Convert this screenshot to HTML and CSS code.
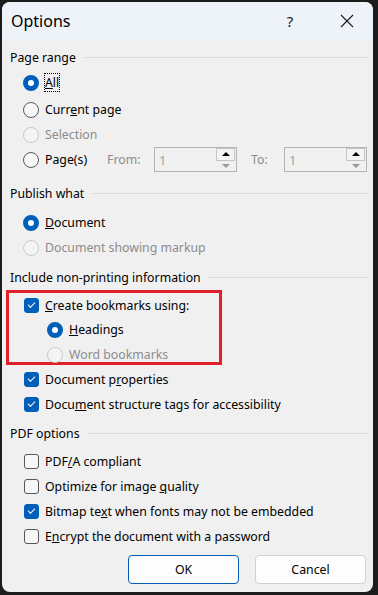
FILE: index.html
```html
<!DOCTYPE html>
<html lang="en">
<head>
    <meta charset="UTF-8">
    <title>Options</title>
    <link rel="stylesheet" href="styles.css">
</head>
<body>
    <div class="window">
        <div class="titlebar">
            <span class="title">Options</span>
            <span class="help">?</span>
            <span class="close">
                <svg width="14" height="14" viewBox="0 0 14 14"><path d="M1 1L13 13M13 1L1 13" stroke="#1a1a1a" stroke-width="1.1" fill="none"/></svg>
            </span>
        </div>
        <div class="content">
            <div class="group-head first"><span>Page range</span></div>
            <div class="row gap"><span class="radio checked"></span><span class="label focus"><u>A</u>ll</span></div>
            <div class="row"><span class="radio"></span><span class="label">Curr<u>e</u>nt page</span></div>
            <div class="row disabled"><span class="radio"></span><span class="label">Selection</span></div>
            <div class="row pages">
                <span class="radio"></span><span class="label pages-label">Pa<u>g</u>e(s)</span>
                <span class="field-label from">From:</span>
                <div class="spin"><span class="spin-value">1</span><div class="spin-btns"><span class="up"></span><span class="down"></span></div></div>
                <span class="field-label to">To:</span>
                <div class="spin"><span class="spin-value">1</span><div class="spin-btns"><span class="up"></span><span class="down"></span></div></div>
            </div>

            <div class="group-head publish"><span>Publish what</span></div>
            <div class="row"><span class="radio checked"></span><span class="label"><u>D</u>ocument</span></div>
            <div class="row disabled"><span class="radio"></span><span class="label">Document showing markup</span></div>

            <div class="group-head"><span>Include non-printing information</span></div>
            <div class="highlight">
                <div class="row"><span class="check checked"></span><span class="label"><u>C</u>reate bookmarks using:</span></div>
                <div class="row sub"><span class="radio checked"></span><span class="label"><u>H</u>eadings</span></div>
                <div class="row sub disabled"><span class="radio"></span><span class="label">Word bookmarks</span></div>
            </div>
            <div class="row"><span class="check checked"></span><span class="label">Document p<u>r</u>operties</span></div>
            <div class="row"><span class="check checked"></span><span class="label">Docu<u>m</u>ent structure tags for accessibility</span></div>

            <div class="group-head pdf"><span>PDF options</span></div>
            <div class="row"><span class="check"></span><span class="label">PDF<u>/</u>A compliant</span></div>
            <div class="row"><span class="check"></span><span class="label">Optimize for image <u>q</u>uality</span></div>
            <div class="row"><span class="check checked"></span><span class="label">Bitmap te<u>x</u>t when fonts may not be embedded</span></div>
            <div class="row"><span class="check"></span><span class="label">E<u>n</u>crypt the document with a password</span></div>

            <div class="buttons">
                <button class="btn default">OK</button>
                <button class="btn">Cancel</button>
            </div>
        </div>
    </div>
</body>
</html>
```

FILE: styles.css
```css
body {
    margin: 0;
    padding: 2px 5px 3px 2px;
    background-color: #1c1c1c;
    font-family: "Noto Sans", "Open Sans", sans-serif;
    font-size: 12.3px;
    color: #000;
}
.window {
    width: 371px;
    height: 590px;
    background-color: #f0f0f0;
    border-radius: 8px;
    overflow: hidden;
}
.titlebar {
    height: 38px;
    background-color: #eef3f9;
    display: flex;
    align-items: center;
}
.title {
    font-size: 16px;
    margin-left: 9px;
    flex: 1;
}
.help {
    font-size: 15px;
    width: 20px;
    text-align: center;
    margin-right: 40px;
    color: #1a1a1a;
}
.close {
    width: 14px;
    height: 14px;
    margin-right: 19px;
    display: flex;
}
.content {
    padding: 4px 5px 0 8px;
}
.group-head {
    display: flex;
    align-items: center;
    height: 26px;
    margin-top: 4px;
    margin-bottom: 2.5px;
}
.group-head.first {
    margin-top: 0;
    margin-bottom: 0;
}
.group-head.publish {
    margin-bottom: 4px;
}
.group-head.pdf {
    margin-top: 3px;
}
.group-head::after {
    content: "";
    flex: 1;
    height: 1px;
    background-color: #dadada;
    margin-left: 8px;
}
.row {
    display: flex;
    align-items: center;
    height: 25px;
    padding-left: 14px;
}
.row.gap {
    margin-bottom: 2px;
}
.row .label {
    margin-left: 6px;
}
.disabled {
    color: #8c8c8c;
}
.radio {
    width: 14px;
    height: 14px;
    margin-left: -1px;
    border: 1px solid #575757;
    border-radius: 50%;
    background-color: #f7f7f7;
    flex: none;
}
.radio.checked {
    width: 6px;
    height: 6px;
    border: 5px solid #005fb8;
    background-color: #fff;
}
.disabled .radio {
    border-color: #c9c9c9;
    background-color: #f4f4f4;
}
.check {
    width: 13px;
    height: 13px;
    border: 1px solid #575757;
    border-radius: 3px;
    background-color: #f7f7f7;
    flex: none;
    position: relative;
}
.check.checked {
    border-color: #005fb8;
    background-color: #005fb8;
}
.check.checked::after {
    content: "";
    position: absolute;
    left: 3px;
    top: 3px;
    width: 6px;
    height: 3px;
    border-left: 1px solid #fff;
    border-bottom: 1px solid #fff;
    transform: rotate(-45deg);
}
.focus {
    outline: 1px dotted #000;
}
.pages {
    margin-bottom: 8px;
}
.pages-label {
    width: 62px;
    flex: none;
}
.field-label {
    color: #8c8c8c;
    flex: none;
}
.from {
    width: 47px;
}
.to {
    margin-left: 14px;
    width: 33px;
}
.spin {
    width: 81px;
    height: 23px;
    border: 1px solid #b4b4b4;
    display: flex;
    align-items: center;
    justify-content: space-between;
    flex: none;
}
.spin-value {
    color: #a0a0a0;
    font-size: 13px;
    margin-left: 4px;
}
.spin-btns {
    width: 19px;
    height: 23px;
    display: flex;
    flex-direction: column;
    margin-right: 1px;
}
.spin-btns span {
    flex: 1;
    display: flex;
    align-items: center;
    justify-content: center;
}
.spin-btns .up {
    border: 1px solid #c4c4c4;
    background-color: #f4f4f4;
}
.spin-btns .up::after {
    content: "";
    border-left: 4px solid transparent;
    border-right: 4px solid transparent;
    border-bottom: 4px solid #000;
}
.spin-btns .down::after {
    content: "";
    border-left: 4px solid transparent;
    border-right: 4px solid transparent;
    border-top: 4px solid #9a9a9a;
}
.highlight {
    border: 3px solid #e3202a;
    margin-left: -4px;
    width: 210px;
    height: 69px;
    margin-top: -2.5px;
    margin-bottom: 2px;
}
.highlight .row {
    padding-left: 15px;
    height: 24px;
}
.highlight .row.sub {
    padding-left: 39px;
    height: 25px;
}
.buttons {
    display: flex;
    justify-content: flex-end;
    gap: 16px;
    margin-top: 6px;
    margin-right: 2px;
}
.btn {
    width: 111px;
    height: 29px;
    font-family: "Noto Sans", "Open Sans", sans-serif;
    font-size: 12.3px;
    background-color: #fdfdfd;
    border: 1px solid #d0d0d0;
    border-radius: 4px;
    color: #000;
}
.btn.default {
    border-color: #005fb8;
}
```
